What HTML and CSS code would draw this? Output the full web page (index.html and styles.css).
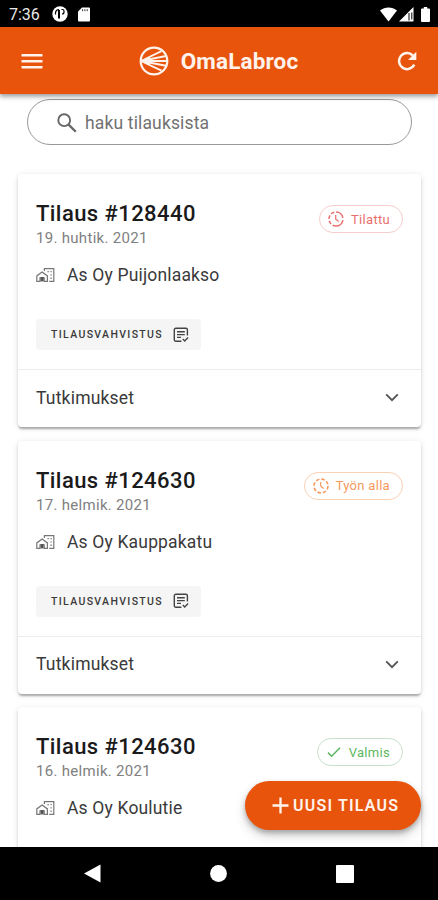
FILE: index.html
```html
<!DOCTYPE html>
<html lang="fi">
<head>
<meta charset="utf-8">
<title>OmaLabroc</title>
<link rel="stylesheet" href="styles.css">
</head>
<body>
<svg class="defs" aria-hidden="true">
  <symbol id="home-work" viewBox="0 0 20 16"><g fill="none" stroke="#777" stroke-width="1.2"><path d="M.8 14.4V8.9l5.300-4 5.300 4v5.500H8.200v-3.600H4v3.600zM8.400 4V1.600h9.400v12.800h-4.600"/></g><path d="M4.600 10h3v4.400h-3z" fill="#555"/><path d="M11.400 3.900h1.500v1.400h-1.500zM14.400 3.900h1.400v1.400h-1.400zM14.400 7.200h1.400v1.400h-1.400zM14.400 10.500h1.400v1.400h-1.400z" fill="#888"/></symbol>
  <symbol id="note-check" viewBox="0 0 16 16"><path d="M8.400 14.200H2.800a1.500 1.500 0 0 1-1.500-1.500V2.800a1.500 1.500 0 0 1 1.500-1.500h10.100a1.500 1.500 0 0 1 1.500 1.500v5.600M4 4.800h7.800M4 7.600h7.800M4 10.400h4M9.800 12.100l1.900 1.900 3.400-3.400" fill="none" stroke="#444" stroke-width="1.400"/></symbol>
  <symbol id="chevron" viewBox="0 0 14 9"><path d="M1.200 1.400 7 7.200l5.800-5.800" fill="none" stroke="#555" stroke-width="1.900"/></symbol>
  <symbol id="clock" viewBox="0 0 16 16"><path d="M8 1a7 7 0 0 1 0 14" fill="none" stroke="currentColor" stroke-width="1.500" stroke-dasharray="9.800 2.300"/><path d="M8 15A7 7 0 0 1 8 1" fill="none" stroke="currentColor" stroke-width="1.500" stroke-dasharray="3.600 1.900"/><path d="M7.700 4v4.300l3 2.200" fill="none" stroke="currentColor" stroke-width="1.200"/></symbol>
  <symbol id="clock-dashed" viewBox="0 0 16 16"><circle cx="8" cy="8" r="7" fill="none" stroke="currentColor" stroke-width="1.600" stroke-dasharray="3.600 1.900"/><path d="M7.700 4v4.300l3 2.200" fill="none" stroke="currentColor" stroke-width="1.200"/></symbol>
</svg>
<div class="screen">
  <header class="status">
    <span class="time">7:36</span>
    <svg class="s-app" width="16" height="16" viewBox="0 0 16 16"><circle cx="8" cy="8" r="7.700" fill="#fff"/><path d="M7 4v8.500" fill="none" stroke="#000" stroke-width="2"/><path d="M3.500 8.500V7A3.500 3.500 0 0 1 7 3.500M9.500 3.500h1a1.500 1.500 0 0 1 1.500 1.500v1A2 2 0 0 1 10 8" fill="none" stroke="#000" stroke-width="1.200"/></svg>
    <svg width="12" height="15" viewBox="0 0 12 15"><path d="M4 .5h7a1 1 0 0 1 1 1v12a1 1 0 0 1-1 1H1a1 1 0 0 1-1-1V4.500z" fill="#fff"/><path d="M4.600 2.200v2M6.900 2.200v2M9.200 2.200v2" stroke="#000" stroke-width=".8"/></svg>
    <div class="status-right">
      <svg width="17" height="15" viewBox="0 0 17 15"><path d="M0 3.600C5 -.6 12-.6 17 3.600L8.500 14.500z" fill="#fff"/></svg>
      <svg width="15" height="15" viewBox="0 0 15 15"><path d="M0 14.500 14.500 0v14.500z" fill="#fff"/><path d="M10 6v7.500M12.800 5.500v7" stroke="#000" stroke-width="1"/></svg>
      <svg class="s-batt" width="9" height="15" viewBox="0 0 9 15"><path d="M2.800 0h3.400v1.500H8a1 1 0 0 1 1 1V14a1 1 0 0 1-1 1H1a1 1 0 0 1-1-1V2.500a1 1 0 0 1 1-1h1.800z" fill="#fff"/></svg>
    </div>
  </header>
  <nav class="appbar">
    <svg width="22" height="16" viewBox="0 0 22 16"><path d="M.5 2.200h21M.5 8.200h21M.5 14.200h21" stroke="#fff3ec" stroke-width="2.500"/></svg>
    <div class="brand">
      <svg width="30" height="30" viewBox="0 0 30 30"><g fill="none" stroke="#fff3ec"><circle cx="15" cy="15" r="13.300" stroke-width="2.200"/><path d="M2 15 22.500 5.200M2 15l25-5M2 15h26M2 15l25 4.800M2 15l20.500 9.600" stroke-width="1.900"/></g><path d="M1.600 15 11 10.600v8.800z" fill="#fff3ec"/></svg>
      <span>OmaLabroc</span>
    </div>
    <svg width="20" height="20" viewBox="0 0 20 20"><path d="M17.300 13.600A8 8 0 1 1 15.800 4.500" fill="none" stroke="#fff3ec" stroke-width="2.500"/><path d="M19.300.8v8.300H11z" fill="#fff3ec"/></svg>
  </nav>
  <main class="content">
    <div class="search">
      <svg width="20" height="20" viewBox="0 0 20 20"><circle cx="7.200" cy="7.200" r="5.900" fill="none" stroke="#666" stroke-width="1.900"/><path d="m11.600 11.600 7.200 7.200" stroke="#666" stroke-width="2.300"/></svg>
      <span>haku tilauksista</span>
    </div>
    <section class="card">
      <div class="body">
        <div class="head">
          <div><h2>Tilaus #128440</h2><p class="date">19. huhtik. 2021</p></div>
          <span class="chip red"><svg width="16" height="16"><use href="#clock"/></svg>Tilattu</span>
        </div>
        <div class="site"><svg width="20" height="16"><use href="#home-work"/></svg>As Oy Puijonlaakso</div>
        <div class="confirm">TILAUSVAHVISTUS<svg width="16" height="16"><use href="#note-check"/></svg></div>
      </div>
      <div class="more"><span>Tutkimukset</span><svg width="14" height="9"><use href="#chevron"/></svg></div>
    </section>
    <section class="card">
      <div class="body">
        <div class="head">
          <div><h2>Tilaus #124630</h2><p class="date">17. helmik. 2021</p></div>
          <span class="chip orange"><svg width="16" height="16"><use href="#clock-dashed"/></svg>Työn alla</span>
        </div>
        <div class="site"><svg width="20" height="16"><use href="#home-work"/></svg>As Oy Kauppakatu</div>
        <div class="confirm">TILAUSVAHVISTUS<svg width="16" height="16"><use href="#note-check"/></svg></div>
      </div>
      <div class="more"><span>Tutkimukset</span><svg width="14" height="9"><use href="#chevron"/></svg></div>
    </section>
    <section class="card">
      <div class="body">
        <div class="head">
          <div><h2>Tilaus #124630</h2><p class="date">16. helmik. 2021</p></div>
          <span class="chip green"><svg width="16" height="16" viewBox="0 0 16 16"><path d="m2 8.600 3.600 3.600L14 3.800" fill="none" stroke="currentColor" stroke-width="1.500"/></svg>Valmis</span>
        </div>
        <div class="site"><svg width="20" height="16"><use href="#home-work"/></svg>As Oy Koulutie</div>
      </div>
    </section>
    <div class="fab"><svg width="17" height="17" viewBox="0 0 17 17"><path d="M8.500.5v16M.5 8.500h16" stroke="#fff3ec" stroke-width="2.300"/></svg>UUSI TILAUS</div>
  </main>
  <footer class="navbar">
    <svg width="17" height="19" viewBox="0 0 17 19"><path d="M0 9.500 16.500.5v18z" fill="#fff"/></svg>
    <svg width="17" height="17" viewBox="0 0 17 17"><circle cx="8.500" cy="8.500" r="8.400" fill="#fff"/></svg>
    <svg width="18" height="18" viewBox="0 0 18 18"><rect width="18" height="18" rx="1" fill="#fff"/></svg>
  </footer>
</div>
</body>
</html>
```
FILE: styles.css
```css
* { box-sizing: border-box; }
body { margin: 0; background: #fff; font-family: Roboto, sans-serif; color: #3a3a3a; }
svg { display: block; flex: none; }
.defs { display: none; }
.screen { width: 438px; height: 900px; display: flex; flex-direction: column; overflow: hidden; }

.status { height: 27px; flex: none; background: #000; display: flex; align-items: center; padding: 1px 8px 0 9px; }
.time { width: 43px; color: #e8e8e8; font-size: 16px; }
.s-app { margin-right: 10px; }
.status-right { margin-left: auto; display: flex; gap: 2px; }
.s-batt { margin-left: 5px; }

.appbar { height: 67px; flex: none; background: #e8540c; display: flex; align-items: center; justify-content: space-between; padding: 1px 21px 0 21px; position: relative; z-index: 1; box-shadow: 0 2px 4px rgba(0,0,0,.3), 0 4px 5px rgba(0,0,0,.12); }
.brand { display: flex; align-items: center; gap: 12px; color: #fff3ec; font-size: 22.5px; font-weight: 700; letter-spacing: .15px; margin-left: -3px; }

.content { height: 753px; flex: none; padding: 5px 17px 0 18px; overflow: hidden; position: relative; }
.search { height: 46px; margin: 0 9px 29px; border: 1.5px solid #999; border-radius: 23px; display: flex; align-items: center; gap: 8px; padding: 1px 0 0 29px; font-size: 17.5px; letter-spacing: .15px; color: #717171; }

.card { height: 253px; margin-bottom: 13.5px; border-radius: 4px; background: #fff; box-shadow: 0 3px 2px -1px rgba(0,0,0,.2), 0 2px 3px rgba(0,0,0,.13), 0 1px 6px rgba(0,0,0,.1); }
.body { height: 195px; padding: 24px 18px 0; }
.head { display: flex; justify-content: space-between; }
h2 { margin: 0; color: #1a1a1a; font-size: 22px; line-height: 31px; font-weight: 500; letter-spacing: .43px; }
.date { margin: -1px 0 1px; font-size: 15px; line-height: 20px; letter-spacing: .3px; color: #808080; }
.chip { height: 28px; margin-top: 7px; border: 1px solid; border-radius: 14px; display: flex; align-items: center; gap: 7px; padding: 0 12px 0 8px; font-size: 13px; letter-spacing: .3px; }
.red { color: #e8706c; border-color: #f7cccc; }
.orange { color: #f49a5c; border-color: #fbd0b4; }
.green { color: #5cb760; border-color: #c8e0ca; }
.site { height: 24px; margin-top: 14px; display: flex; align-items: center; gap: 11px; font-size: 17.5px; letter-spacing: .17px; }
.confirm { width: 165px; height: 31px; margin-top: 32px; border-radius: 4px; background: #f5f5f5; display: flex; align-items: center; justify-content: space-between; padding: 0 12px 0 15px; font-size: 10.5px; font-weight: 500; letter-spacing: 1.35px; }
.more { height: 58px; border-top: 1px solid #ececec; display: flex; align-items: center; justify-content: space-between; padding: 0 22px 2px 18px; font-size: 17.5px; letter-spacing: .2px; }

.fab { position: absolute; right: 17px; bottom: 17px; width: 176px; height: 49px; border-radius: 25px; background: #e8540c; color: #fff3ec; display: flex; align-items: center; gap: 4px; padding-left: 27px; font-size: 16px; font-weight: 600; letter-spacing: 1.2px; white-space: nowrap; box-shadow: 0 3px 5px rgba(0,0,0,.25), 0 6px 12px rgba(0,0,0,.16); }

.navbar { height: 53px; flex: none; background: #000; display: flex; align-items: center; justify-content: space-between; padding: 0 84px; }
```
